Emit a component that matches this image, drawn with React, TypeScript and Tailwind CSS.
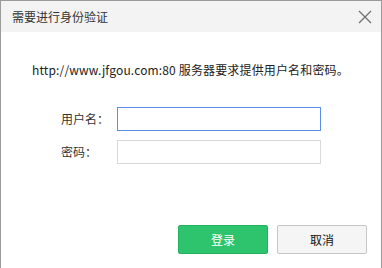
import React from "react";

export default function App() {
  const font = { fontFamily: '"Noto Sans CJK SC", "Liberation Sans", sans-serif' };
  return (
    <div
      className="w-[382px] h-[268px] bg-white border-x border-t border-[#9a9a9a] flex flex-col text-[12px] text-[#333]"
      style={font}
    >
      <div className="h-[31px] bg-[#f3f3f3] flex items-center justify-between pl-[11px] pr-[9px]">
        <span className="text-[12px] text-[#333] leading-none">需要进行身份验证</span>
        <svg width="14" height="14" viewBox="0 0 14 14">
          <path d="M1 1 L13 13 M13 1 L1 13" stroke="#707070" strokeWidth="1.3" fill="none" />
        </svg>
      </div>
      <div className="flex flex-col flex-1">
        <div className="pl-[31px] mt-[30px] leading-[16px] text-[#222] tracking-[0.15px]">
          http://www.jfgou.com:80 服务器要求提供用户名和密码。
        </div>
        <div className="flex flex-col gap-[9px] mt-[29px]">
          <div className="flex items-center">
            <span className="w-[56px] ml-[60px] text-[#333]">用户名：</span>
            <input className="w-[204px] h-[24px] border border-[#5a8ee8] outline-none px-1" />
          </div>
          <div className="flex items-center">
            <span className="w-[56px] ml-[60px] text-[#333]">密码：</span>
            <input className="w-[204px] h-[24px] border border-[#d9d9d9] outline-none px-1" />
          </div>
        </div>
        <div className="flex justify-end gap-[9px] mt-[61px] pr-[14px]">
          <button className="w-[90px] h-[29px] rounded-[2px] bg-[#2ec46d] border border-[#23b35f] text-white text-[12px]">
            登录
          </button>
          <button className="w-[90px] h-[29px] rounded-[2px] bg-[#f5f5f5] border border-[#c6c6c6] text-[#111] text-[12px]">
            取消
          </button>
        </div>
      </div>
    </div>
  );
}
